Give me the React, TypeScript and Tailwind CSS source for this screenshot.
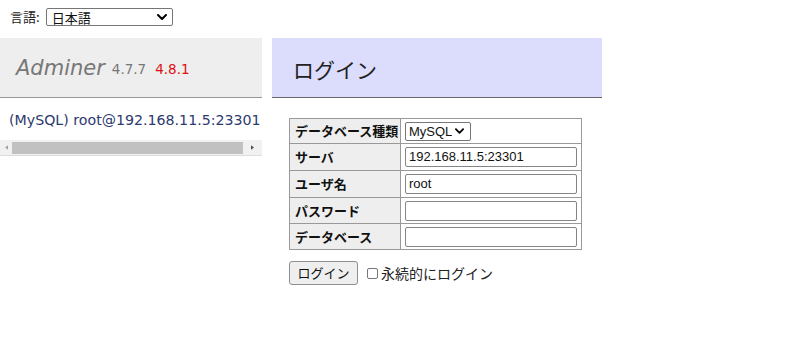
import React from "react";

const jp = { fontFamily: '"Noto Sans CJK JP", sans-serif' };

function Chevron({ className }: { className?: string }) {
  return (
    <svg viewBox="0 0 10 6" className={className} fill="none">
      <path d="M1 1 L5 5 L9 1" stroke="#000" strokeWidth="2" strokeLinecap="round" strokeLinejoin="round" />
    </svg>
  );
}

function Input({ value }: { value?: string }) {
  return (
    <div
      className="ml-[4px] w-[172px] h-[20px] border border-[#858585] rounded-[2px] bg-white flex items-center pl-[3px] text-[13px] text-[#111]"
      style={{ fontFamily: '"Liberation Sans", Arial, sans-serif' }}
    >
      {value}
    </div>
  );
}

function Row({ label, children, h }: { label: string; children: React.ReactNode; h: string }) {
  return (
    <div className={`flex ${h} border-t border-[#999] first:border-t-0`}>
      <div
        className="w-[111px] shrink-0 bg-[#eee] border-r border-[#999] flex items-center pl-[5px] text-[13px] font-bold text-[#111]"
        style={jp}
      >
        {label}
      </div>
      <div className="flex-1 flex items-center bg-white">{children}</div>
    </div>
  );
}

export default function App() {
  return (
    <div className="w-[800px] h-[350px] bg-white relative overflow-hidden" style={{ fontFamily: '"DejaVu Sans", "Noto Sans CJK JP", sans-serif' }}>
      {/* language row */}
      <div className="h-[38px] flex items-start pt-[8px] pl-[10px]">
        <span className="text-[13px] text-[#222] leading-[18px] mr-[6px]" style={jp}>
          言語:
        </span>
        <div className="w-[127px] h-[18px] border border-[#767676] rounded-[2px] flex items-center justify-between pl-[5px] pr-[5px]">
          <span className="text-[13px] text-[#111] leading-none" style={jp}>日本語</span>
          <Chevron className="w-[10px] h-[6px]" />
        </div>
      </div>

      <div className="flex gap-[10px]">
        {/* left menu */}
        <div className="w-[262px] shrink-0">
          <div className="h-[60px] bg-[#eee] border-b border-[#999] flex items-center pl-[16px] pt-[1px]">
            <span className="italic text-[21px] text-[#777] leading-none">Adminer</span>
            <span className="text-[13.5px] text-[#777] ml-[7px] leading-none mt-[4px]">4.7.7</span>
            <span className="text-[13.5px] text-[#e01010] ml-[9px] leading-none mt-[4px]">4.8.1</span>
          </div>
          <div className="pt-[10px] pl-[9px] whitespace-nowrap">
            <span className="text-[14.2px] leading-[18px] text-[#2d3a6e]">(MySQL) root@192.168.11.5:23301</span>
          </div>
          <div className="mt-[8px] h-[16px] bg-[#f1f1f1] border-b border-[#ddd] flex items-center">
            <div className="w-[12px] flex justify-center">
              <svg viewBox="0 0 4 6" className="w-[3px] h-[5px]"><path d="M4 0 L0 3 L4 6 Z" fill="#a3a3a3" /></svg>
            </div>
            <div className="w-[231px] h-[12px] bg-[#c1c1c1]" />
            <div className="flex-1 flex justify-center">
              <svg viewBox="0 0 4 6" className="w-[3px] h-[5px]"><path d="M0 0 L4 3 L0 6 Z" fill="#505050" /></svg>
            </div>
          </div>
        </div>

        {/* content */}
        <div className="w-[330px] shrink-0">
          <div className="h-[60px] bg-[#dcdcfc] border-b border-[#666] flex items-center pl-[21px] pt-[4px]">
            <span className="text-[21px] text-[#222] leading-none" style={jp}>ログイン</span>
          </div>

          <div className="ml-[17px] mt-[20px] w-[293px] border border-[#999]">
            <Row label="データベース種類" h="h-[24px]">
              <div className="ml-[4px] w-[66px] h-[19px] border border-[#767676] rounded-[2px] flex items-center justify-between pl-[3px] pr-[6px]">
                <span className="text-[13px] text-[#111] leading-none" style={{ fontFamily: '"Liberation Sans", Arial, sans-serif' }}>MySQL</span>
                <Chevron className="w-[9px] h-[6px]" />
              </div>
            </Row>
            <Row label="サーバ" h="h-[27px]">
              <Input value="192.168.11.5:23301" />
            </Row>
            <Row label="ユーザ名" h="h-[27px]">
              <Input value="root" />
            </Row>
            <Row label="パスワード" h="h-[26px]">
              <Input />
            </Row>
            <Row label="データベース" h="h-[26px]">
              <Input />
            </Row>
          </div>

          <div className="ml-[17px] mt-[11px] flex items-center">
            <div
              className="w-[69px] h-[24px] bg-[#efefef] border border-[#8f8f8f] rounded-[3px] flex items-center justify-center text-[13px] text-[#111]"
              style={jp}
            >
              ログイン
            </div>
            <div className="ml-[9px] w-[11px] h-[11px] border border-[#767676] rounded-[2px] bg-white" />
            <span className="ml-[3px] text-[14px] text-[#222] leading-none" style={jp}>永続的にログイン</span>
          </div>
        </div>
      </div>
    </div>
  );
}
